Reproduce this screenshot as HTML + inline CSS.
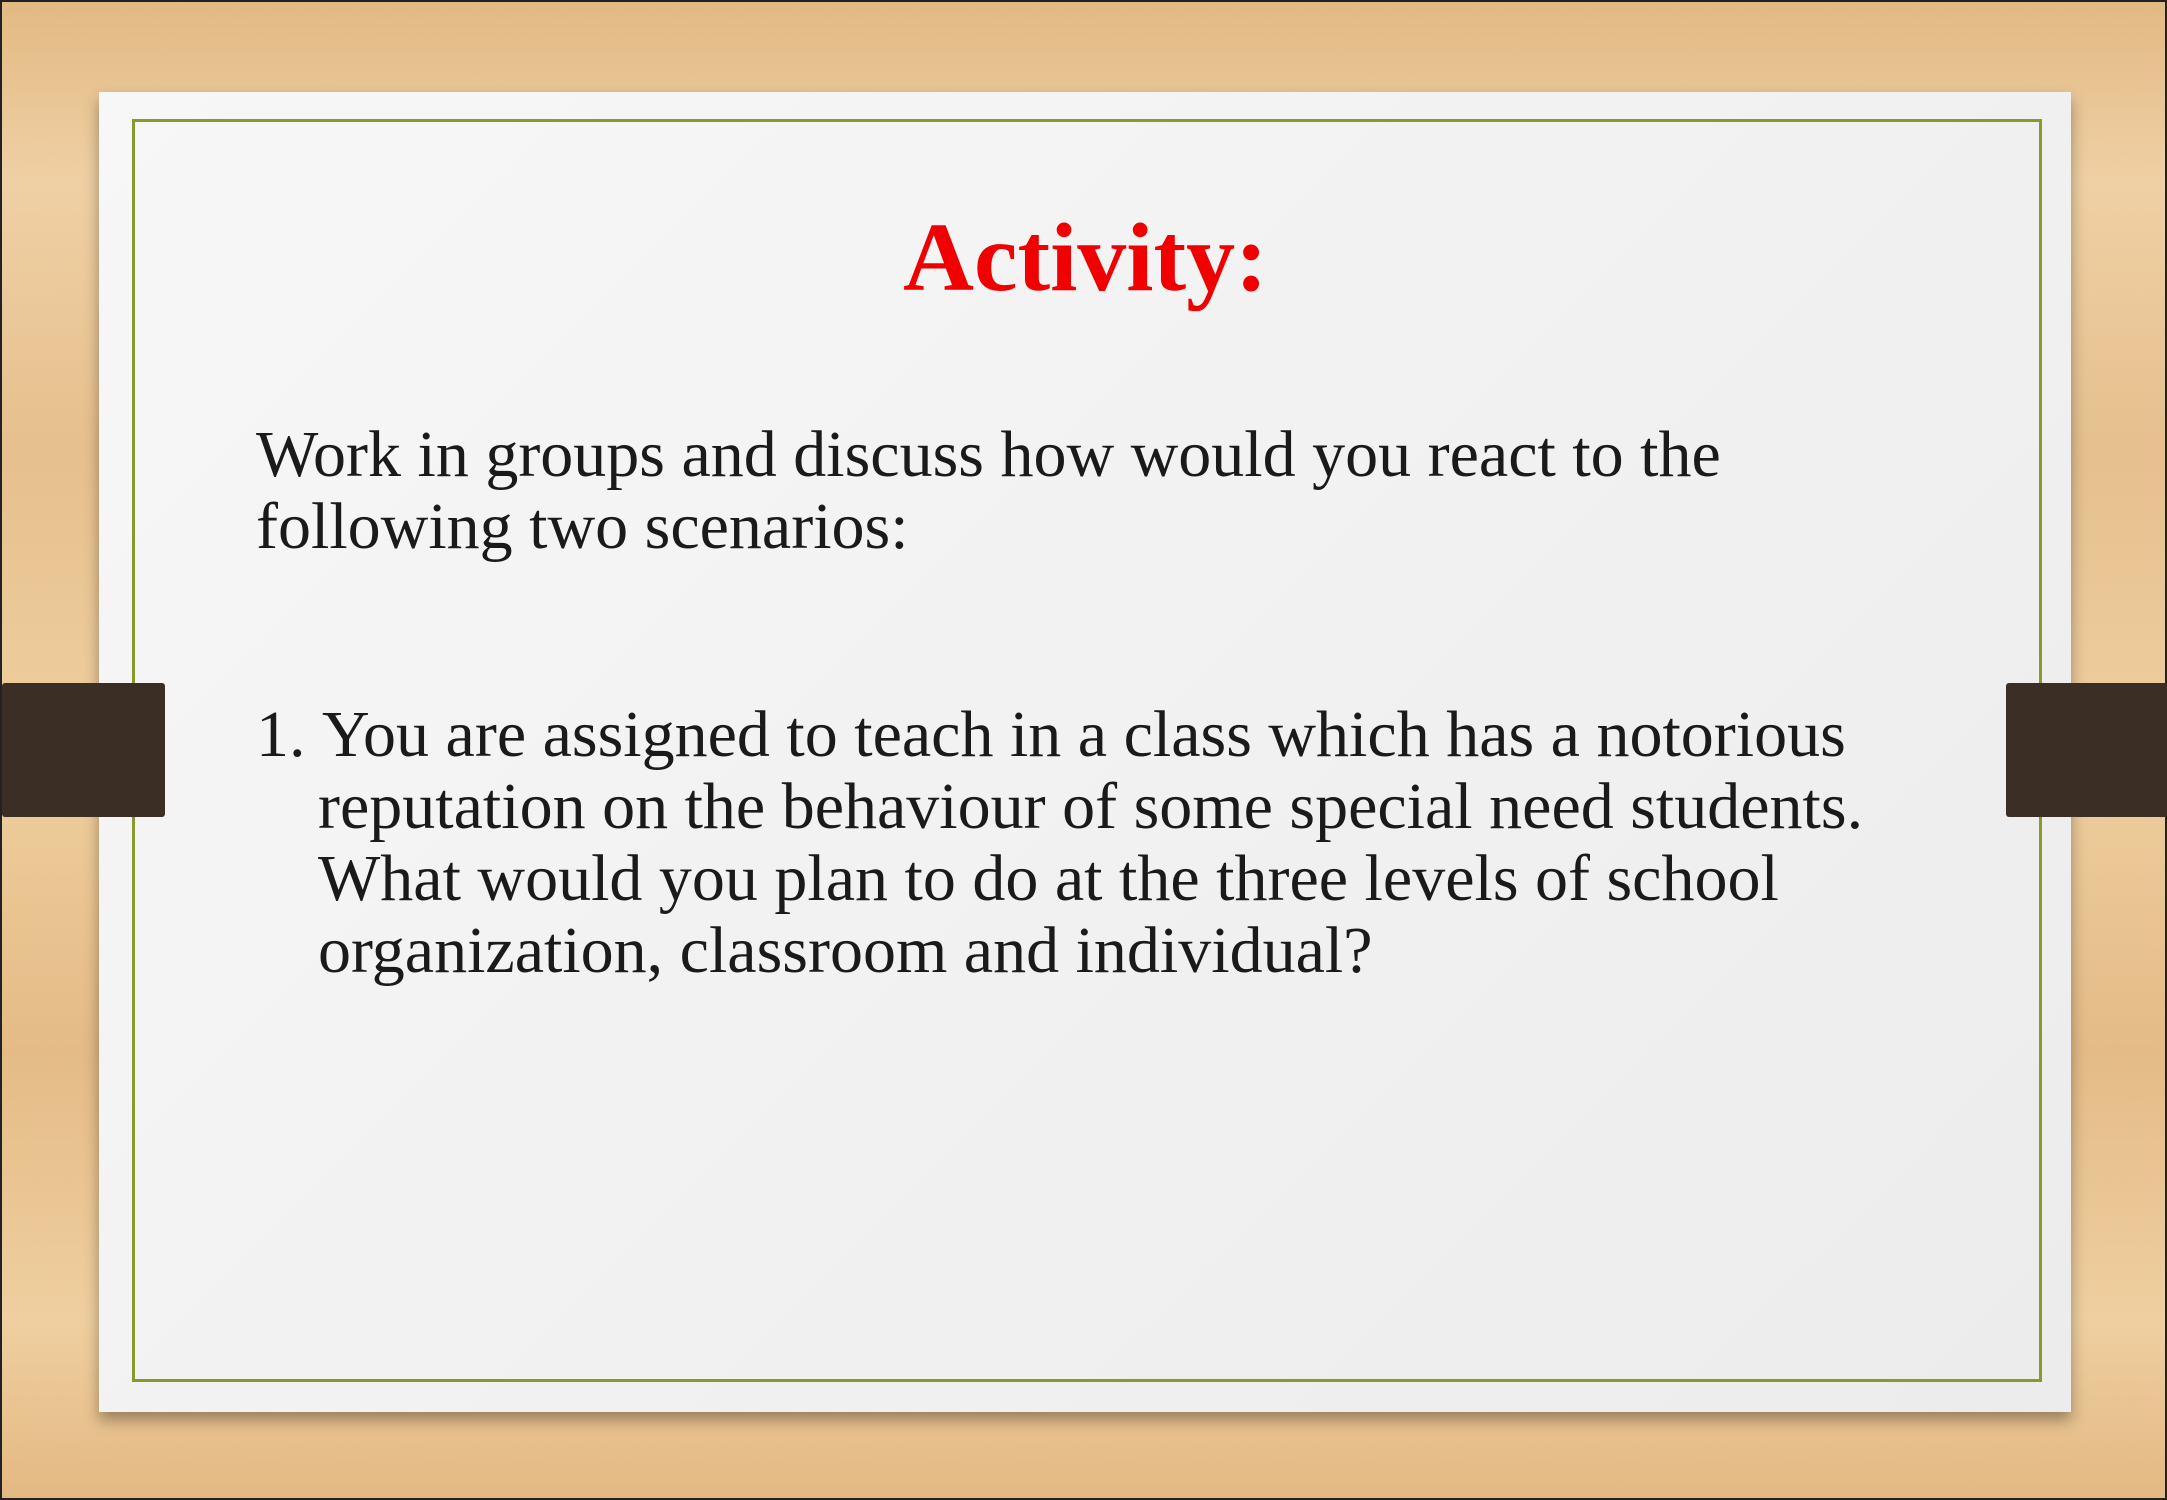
<!DOCTYPE html>
<html><head><style>
html,body{margin:0;padding:0;}
body{width:2167px;height:1500px;position:relative;overflow:hidden;
background:linear-gradient(180deg,#e2b983 0%,#efd0a4 12%,#e6c08e 30%,#efcf9f 50%,#e4bb86 70%,#efcfa0 88%,#e3b882 100%);
box-sizing:border-box;border:2px solid #222;font-family:"Liberation Serif",serif;}
.band{position:absolute;top:681px;height:134px;width:163px;background:#3a2e25;z-index:2;border-radius:3px;}
.paper{position:absolute;left:97px;top:90px;width:1972px;height:1320px;
background:linear-gradient(135deg,#f7f7f7,#ececec);box-shadow:0 8px 14px rgba(0,0,0,0.35);}
.frame{position:absolute;left:130px;top:117px;width:1904px;height:1257px;border:3px solid #8a9a2a;}
.t{position:absolute;white-space:nowrap;color:#1a1a1a;font-size:66px;z-index:3;}
h1{position:absolute;left:0;width:2167px;text-align:center;top:207px;margin:0;color:#f00000;font-size:98px;font-weight:bold;line-height:1;}
</style></head><body>
<div class="band" style="left:0"></div>
<div class="band" style="left:2004px"></div>
<div class="paper"></div>
<div class="frame"></div>
<h1>Activity:</h1>
<div class="t" style="left:254px;top:415px">Work in groups and discuss how would you react to the</div>
<div class="t" style="left:254px;top:487px">following two scenarios:</div>
<div class="t" style="left:254px;top:695px">1.</div>
<div class="t" style="left:320px;top:695px">You are assigned to teach in a class which has a notorious</div>
<div class="t" style="left:316px;top:767px">reputation on the behaviour of some special need students.</div>
<div class="t" style="left:316px;top:839px">What would you plan to do at the three levels of school</div>
<div class="t" style="left:316px;top:911px">organization, classroom and individual?</div>
</body></html>
